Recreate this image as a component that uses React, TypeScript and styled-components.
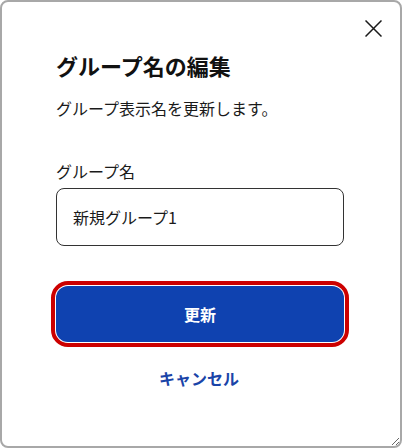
import React from "react";
import styled, { createGlobalStyle } from "styled-components";

const GlobalStyle = createGlobalStyle`
	html, body {
		margin: 0;
		padding: 0;
		background: #ffffff;
	}
	body {
		font-family: "Noto Sans CJK JP", "Noto Sans", sans-serif;
		color: #1a1a1a;
	}
`;

const Dialog = styled.div`
	position: relative;
	box-sizing: border-box;
	width: 402px;
	height: 448px;
	border: 2px solid #a8a8a8;
	border-radius: 8px;
	background: #ffffff;
	padding: 47px 56px 0 54px;
	display: flex;
	flex-direction: column;
	resize: both;
	overflow: auto;
`;

const CloseButton = styled.button`
	position: absolute;
	top: 18px;
	right: 18px;
	width: 17px;
	height: 17px;
	padding: 0;
	border: none;
	background: transparent;
	display: flex;
	align-items: center;
	justify-content: center;
	cursor: pointer;
`;

const Title = styled.h2`
	margin: 0;
	font-size: 22px;
	line-height: 32px;
	font-weight: 700;
	color: #111111;
`;

const Description = styled.p`
	margin: 15px 0 0;
	font-size: 16px;
	line-height: 24px;
	color: #1a1a1a;
`;

const Field = styled.div`
	margin-top: 39px;
	display: flex;
	flex-direction: column;
	gap: 5px;
`;

const Label = styled.label`
	font-size: 16px;
	line-height: 24px;
	color: #1a1a1a;
`;

const TextInput = styled.input`
	box-sizing: border-box;
	width: 288px;
	height: 58px;
	border: 1px solid #333333;
	border-radius: 8px;
	padding: 0 16px;
	font-family: inherit;
	font-size: 16px;
	color: #1a1a1a;
	outline: none;
`;

const Actions = styled.div`
	margin-top: 40px;
	display: flex;
	flex-direction: column;
	align-items: stretch;
	gap: 24px;
`;

const PrimaryButton = styled.button<{ $focused?: boolean }>`
	width: 288px;
	height: 56px;
	border: none;
	border-radius: 12px;
	background: #0f42b0;
	color: #ffffff;
	font-family: inherit;
	font-size: 16px;
	font-weight: 700;
	cursor: pointer;
	outline: ${(p) => (p.$focused ? "4px solid #cc0000" : "none")};
	outline-offset: 1px;
`;

const TextButton = styled.button`
	align-self: center;
	margin-right: 2px;
	border: none;
	background: transparent;
	padding: 0;
	font-family: inherit;
	font-size: 16px;
	line-height: 24px;
	font-weight: 700;
	color: #1a44a8;
	cursor: pointer;
`;

const CloseIcon = () => (
	<svg width="17" height="17" viewBox="0 0 17 17" fill="none">
		<path d="M0.5 0.5L16.5 16.5M16.5 0.5L0.5 16.5" stroke="#1a1a1a" strokeWidth="1.5" />
	</svg>
);

export default function App() {
	return (
		<>
			<GlobalStyle />
			<Dialog role="dialog" aria-labelledby="dialog-title">
				<CloseButton aria-label="閉じる">
					<CloseIcon />
				</CloseButton>
				<Title id="dialog-title">グループ名の編集</Title>
				<Description>グループ表示名を更新します。</Description>
				<Field>
					<Label htmlFor="group-name">グループ名</Label>
					<TextInput id="group-name" defaultValue="新規グループ1" />
				</Field>
				<Actions>
					<PrimaryButton $focused>更新</PrimaryButton>
					<TextButton>キャンセル</TextButton>
				</Actions>
			</Dialog>
		</>
	);
}
